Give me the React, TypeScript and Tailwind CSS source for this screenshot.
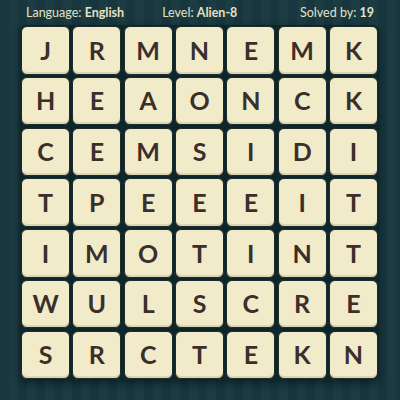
import React from 'react';

const rows = ['JRMNEMK', 'HEAONCK', 'CEMSIDI', 'TPEEEIT', 'IMOTINT', 'WULSCRE', 'SRCTEKN'];

const App: React.FC = () => {
  return (
    <div
      className="w-[400px] h-[400px] overflow-hidden bg-[repeating-linear-gradient(90deg,#17363d_0px,#17363d_9px,#1b3c43_9px,#1b3c43_18px)]"
      style={{ fontFamily: 'Lato, "Noto Sans", sans-serif' }}
    >
      <div className="flex items-center h-[25px] pl-[26px] pr-[26px] pt-[1px] text-[12.5px] text-[#e6e1c4]">
        <span>
          Language: <span className="font-bold">English</span>
        </span>
        <span className="ml-[38px]">
          Level: <span className="font-bold">Alien-8</span>
        </span>
        <span className="ml-auto">
          Solved by: <span className="font-bold">19</span>
        </span>
      </div>
      <div className="ml-[20px] w-[359px] p-[1px] bg-[#0d262c] rounded-[6px] shadow-[0_3px_8px_rgba(0,0,0,0.45)]">
        <div className="grid grid-cols-7 gap-[2.3px]">
          {rows.map((row, r) =>
            row.split('').map((ch, c) => (
              <div
                key={`${r}-${c}`}
                className="h-[48.5px] flex items-center justify-center rounded-[6px] border border-[#1e2b2b] bg-[#f2ebc9] shadow-[inset_0_-2px_0_rgba(160,150,110,0.25)] text-[25px] font-bold text-[#3a2f2a]"
              >
                {ch}
              </div>
            ))
          )}
        </div>
      </div>
    </div>
  );
};

export default App;
